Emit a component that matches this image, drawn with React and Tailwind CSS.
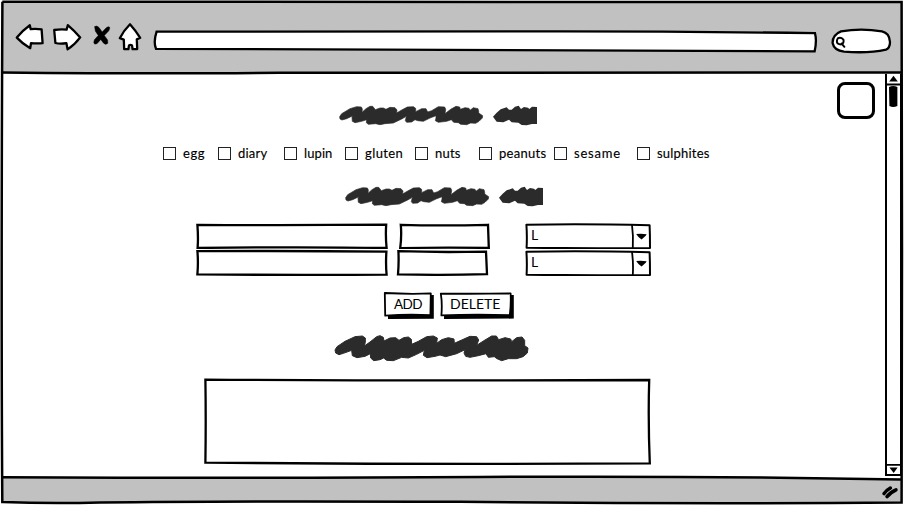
import React from "react";

const ink = {
  fill: "#fff",
  stroke: "#000",
  strokeWidth: 2.3,
  strokeLinejoin: "round",
  strokeLinecap: "round",
};

function BackIcon() {
  return (
    <svg className="block h-[30px] w-[30px] shrink-0" viewBox="15 22 30 30">
      <path {...ink} d="M16.8 37.6Q23 30 29.8 25.2L30.7 29.2Q36 28.6 41.6 29.4L42.6 43.2Q37 43.6 31 43.2L30.2 48.2Q22.5 43.8 16.8 37.6Z" />
    </svg>
  );
}

function ForwardIcon() {
  return (
    <svg className="block h-[30px] w-[30px] shrink-0" viewBox="52 22 30 30">
      <path {...ink} d="M54.2 30Q60 29 66.6 29.6L67.8 25.2Q74.5 31 80.2 37.4Q74.5 45 67.6 49.4L66.4 43.2Q60 44.3 55.4 43Z" />
    </svg>
  );
}

function StopIcon() {
  return (
    <svg className="block h-[30px] w-[20px] shrink-0" viewBox="92 22 20 30">
      <path fill="#000" stroke="#000" strokeWidth="0.5" d="M94.6 26.6Q97 25 99 27.6L102.2 32L106 28Q109.4 25.6 109.8 28L108.8 30.8L104.3 35.5L107.6 40L107.8 43.2Q105.8 45.6 103.4 43L100.8 39.4L97.2 43.4Q94 45.2 93.8 42.2L94.4 39.8L98.3 35.4L95.4 31.2Z" />
    </svg>
  );
}

function HomeIcon() {
  return (
    <svg className="block h-[30px] w-[26px] shrink-0" viewBox="117 22 26 30">
      <path {...ink} d="M130 24.2Q136 31 140.2 37.8L136.8 39.4L137.2 49L132.6 49.2L132 45.4Q130.5 44.4 129 45.4L128.4 49.2L124.2 49.2L123.8 39.6L119.8 38.2Q123.6 30.6 130 24.2Z" />
    </svg>
  );
}

// A hand-drawn outline sharing its grid cell with the control's content.
function Sketch({ className, box, d, width = 2.3, children }) {
  return (
    <div className={"grid shrink-0 " + className}>
      <svg className="block h-full w-full [grid-area:1/1]" viewBox={box}>
        <path {...ink} strokeLinejoin="miter" strokeWidth={width} d={d} />
      </svg>
      {children}
    </div>
  );
}

function Scribble() {
  return (
    <svg className="block h-[50px] w-[220px]" viewBox="0 0 660 150" fill="#2b2b2b">
      <path
        stroke="#2b2b2b"
        strokeWidth="2"
        strokeLinejoin="round"
        d="M29 80L35 71L60 56L80 50L94 51L97 57L96 67L108 56L120 49L128 49L136 59L150 54L160 54L168 58L180 52L195 53L201 60L200 69L215 60L232 51L250 50L257 55L257 65L275 56L288 56L293 66L305 62L325 50L344 51L347 58L345 71L362 58L378 49L389 51L391 58L405 53L417 55L420 61L430 53L444 56L446 64L446 69L458 77L457 84L447 94L437 100L422 99L410 104L392 103L385 98L371 97L364 89L350 94L325 97L316 92L318 84L318 77L300 84L280 94L263 92L255 89L245 96L230 97L226 92L229 79L215 87L190 99L165 101L150 104L137 101L115 103L109 98L110 89L95 94L75 98L67 94L66 82L69 77L50 86L36 90L30 87Z"
      />
      <path d="M489 80L500 68L512 58L530 52L537 59L545 59L555 50L566 47L573 57L582 51L594 53L598 57L606 50L621 51V102H606L590 106L575 105L565 98L545 97L537 89L520 97L500 95Z" />
    </svg>
  );
}

function WideScribble() {
  return (
    <svg className="block h-[50px] w-[220px]" viewBox="0 0 660 150" fill="#2b2b2b">
      <path
        stroke="#2b2b2b"
        strokeWidth="3"
        strokeLinejoin="round"
        d="M30 75L36 65L60 49L90 35L112 33L121 39L121 52L118 63L135 51L155 35L165 32L175 37L177 48L195 39L212 38L222 46L236 38L250 36L259 43L260 58L280 49L305 35L325 33L337 39L335 55L350 44L370 38L387 42L388 55L410 45L435 34L455 35L461 45L455 61L480 45L500 33L514 33L521 44L540 38L557 42L560 50L575 38L591 36L599 46L599 62L609 69L607 84L594 95L575 101L550 101L530 107L516 101L508 95L490 97L483 86L460 92L435 97L422 94L417 84L420 74L395 86L362 95L345 90L330 94L306 98L295 91L298 76L275 88L250 99L230 97L205 107L185 106L176 99L165 104L146 107L137 99L136 86L120 94L96 98L82 92L80 76L55 85L42 89L32 84Z"
      />
    </svg>
  );
}

function Check({ label, className, text }) {
  return (
    <label className={"flex shrink-0 items-center " + className}>
      <span className="h-[13px] w-[13px] shrink-0 border border-[#222] bg-white" />
      <span className={"mb-[2px] ml-[7px] text-[13px] leading-4 whitespace-nowrap [-webkit-text-stroke:0.15px_#000] " + text}>{label}</span>
    </label>
  );
}

function Select({ children }) {
  return (
    <div className="grid h-[27px] w-[128px] shrink-0">
      <svg className="block h-full w-full [grid-area:1/1]" viewBox="524 222 128 27">
        <path {...ink} strokeWidth="2" d="M526.4 224.8Q580 223.7 649.6 225.2L649.9 235L650 248Q590 248.6 526.6 247.8Q527.2 236 526.4 224.8Z" />
        <path {...ink} strokeWidth="1.8" d="M632 225Q633.5 236 632.8 248" />
        <path fill="#000" d="M636.2 234Q641 233.3 646.6 234.2L645.7 235.7L641.6 239.6Q638.5 237.8 636.2 234Z" />
      </svg>
      <span className="z-10 pt-[5px] pl-[7px] text-sm leading-4 [grid-area:1/1]">{children}</span>
    </div>
  );
}

function Scrollbar() {
  return (
    <div className="flex h-[403px] w-[18px] shrink-0 flex-col justify-between">
      <svg className="block h-[36px] w-[18px] shrink-0" viewBox="885 74 18 36">
        <path d="M886 74V110M901 74V110M886 84.4H901" stroke="#000" strokeWidth="2" />
        <path d="M889.2 81.4L893.5 75.8L897.8 81.4Z" />
        <path d="M889 87Q893 85 897.4 87V106Q893 108 889.4 106Z" />
      </svg>
      <div className="w-[17px] grow border-x-2 border-black" />
      <svg className="block h-[13px] w-[18px] shrink-0" viewBox="885 464 18 13">
        <path d="M886 464V475H901V464M886 464.8H901" fill="none" stroke="#000" strokeWidth="2" />
        <path d="M889.4 467.6H897.6L893.7 473Z" />
      </svg>
    </div>
  );
}

function WindowFrame() {
  return (
    <svg className="pointer-events-none absolute inset-0 h-[505px] w-[904px]" viewBox="0 0 904 505">
      <path fill="#fff" d="M560 476.4L901 476.4V479.6Q800 477 560 477.4Z" />
      <path fill="#fff" d="M0 0H904V505H0ZM2.3 1.8V502.5H901.6V2Z" fillRule="evenodd" />
      <g fill="none" stroke="#000" strokeWidth="2.5">
        <path d="M2.3 1.8Q450 1 901.6 2L902 250L901.6 502.6Q680 504.2 460 501.8Q230 500.8 100 502.5Q50 503.8 2.3 502Q1 300 2.4 1.8" />
        <path d="M2 72.4Q160 74 280 72.8L901 72.4" />
        <path d="M2 477.2Q260 478.6 480 477Q700 475.6 901 479.6" />
      </g>
    </svg>
  );
}

export default function App() {
  return (
    <div className="relative flex h-[505px] w-[904px] flex-col overflow-hidden bg-white font-['Lato','Open_Sans',sans-serif] text-black">
      <header className="flex h-[73px] shrink-0 items-start bg-[#c1c1c1] pt-[22px] pl-[15px]">
        <BackIcon />
        <div className="ml-[7px]"><ForwardIcon /></div>
        <div className="ml-[10px]"><StopIcon /></div>
        <div className="ml-[5px]"><HomeIcon /></div>
        <Sketch
          className="mt-[6px] ml-[9px] h-[26px] w-[666px]"
          box="152 28 666 26"
          d="M156.6 31.6Q400 31.6 560 31.4Q690 31.4 815 33.2Q817 41 814.6 51.4Q500 51 156 48.8Q153.2 42 156.6 31.6Z"
        />
        <svg className="mt-[5px] ml-[12px] block h-[28px] w-[62px] shrink-0" viewBox="830 27 62 28">
          <path {...ink} d="M841 31.4Q861 28 882 31.4Q889.5 33 890 42Q890 48 886 49.6Q868 53.6 844 51.6Q834 50.4 832.6 43Q832.4 35 841 31.4Z" />
          <path {...ink} strokeWidth="2" d="M838 38.2Q841 37 843.4 39.6Q844.4 43.6 841 44.4Q836.6 44.4 836.9 41Q837 39 838 38.2M841.6 43.6L844.4 46.8" />
        </svg>
      </header>

      <main className="flex h-[404px] shrink-0 pt-px">
        <div className="flex w-[837px] shrink-0 flex-col">
          <div className="mt-[16px] ml-[330px]"><Scribble /></div>
          <div className="mt-[7px] ml-[163px] flex h-[13px]">
            <Check label="egg" className="w-[55px]" text="tracking-[0.6px]" />
            <Check label="diary" className="w-[66px]" text="tracking-[0.2px]" />
            <Check label="lupin" className="w-[61px]" text="tracking-[0.1px]" />
            <Check label="gluten" className="w-[70px]" text="tracking-[0.4px]" />
            <Check label="nuts" className="w-[64px]" text="tracking-[0.2px]" />
            <Check label="peanuts" className="w-[75px]" text="tracking-[0.3px]" />
            <Check label="sesame" className="w-[83px]" text="tracking-[0.8px]" />
            <Check label="sulphites" className="w-[80px]" text="tracking-[0.2px]" />
          </div>
          <div className="mt-[11px] ml-[336px]"><Scribble /></div>
          <div className="mt-[1px] ml-[195px] flex">
            <Sketch className="h-[27px] w-[194px]" box="195 222 194 27" d="M197.4 224.8Q290 225.4 386.2 224.6Q385.4 236 386.6 248Q300 246.6 197.6 248Q198.4 238 197.4 224.8Z" />
            <Sketch className="ml-[9px] h-[27px] w-[93px]" box="398 222 93 27" d="M400.8 224.8Q440 226 488 224.8L488.8 248Q445 247 400.2 248.2Q401.8 236 400.8 224.8Z" />
            <div className="ml-[33px]"><Select>L</Select></div>
          </div>
          <div className="ml-[195px] flex">
            <Sketch className="h-[27px] w-[194px]" box="195 249 194 27" d="M197.4 251.2Q290 250.6 386.4 251.6Q385.6 264 386.6 274.6Q290 275.2 197.4 274.4Q198.4 262 197.4 251.2Z" />
            <Sketch className="ml-[7px] h-[27px] w-[93px]" box="396 249 93 27" d="M398.4 251.2Q440 252.6 486 251.6L487 274.2Q440 275.4 398 274.4Q399 262 398.4 251.2Z" />
            <div className="ml-[35px]"><Select>L</Select></div>
          </div>
          <div className="mt-[15px] ml-[383px] flex">
            <div className="grid h-[29px] w-[52px] shrink-0">
              <svg className="block h-full w-full [grid-area:1/1]" viewBox="383 291 52 29">
                <path d="M388 296L433.8 295V318.8L388 319Z" />
                <path {...ink} strokeWidth="1.8" d="M384.8 293Q410 294.4 430.8 293.4L430.4 315.2Q410 313.8 385.2 315.6Z" />
              </svg>
              <span className="z-10 pt-[5px] pl-[11px] text-[13.5px] leading-4 tracking-[-0.6px] [grid-area:1/1]">ADD</span>
            </div>
            <div className="ml-[4px] grid h-[29px] w-[77px] shrink-0">
              <svg className="block h-full w-full [grid-area:1/1]" viewBox="439 291 77 29">
                <path d="M444.5 296L513.8 295V318.6L444 319Z" />
                <path {...ink} strokeWidth="1.8" d="M440.8 293.6Q475 294 510.6 293.4Q511.2 304 509.8 315.2Q475 314 441.4 315.4Q442.4 303 440.8 293.6Z" />
              </svg>
              <span className="z-10 pt-[5px] pl-[11px] text-sm leading-4 [grid-area:1/1]">DELETE</span>
            </div>
          </div>
          <div className="mt-[5px] ml-[325px]"><WideScribble /></div>
          <Sketch className="mt-[2px] ml-[202px] h-[90px] w-[450px]" box="202 377 450 90" d="M205.4 379.6Q420 381 649.2 380Q648 420 649.8 463.4Q430 464.6 205.4 462.6Q206 420 205.4 379.6Z" />
        </div>
        <div className="w-[48px] shrink-0 pt-[8px]">
          <div className="h-[37px] w-[38px] rounded-[8px] border-[3px] border-black bg-white" />
        </div>
        <Scrollbar />
      </main>

      <footer className="flex h-[28px] shrink-0 justify-end bg-[#c1c1c1] pt-[6px] pr-[4px]">
        <svg className="block h-[18px] w-[20px]" viewBox="880 483 20 18">
          <path d="M884 493.6Q886 490.4 890.4 488M887 496.6Q890 492.6 896 489.8" fill="none" stroke="#000" strokeWidth="3.5" strokeLinecap="round" />
        </svg>
      </footer>
      <WindowFrame />
    </div>
  );
}
